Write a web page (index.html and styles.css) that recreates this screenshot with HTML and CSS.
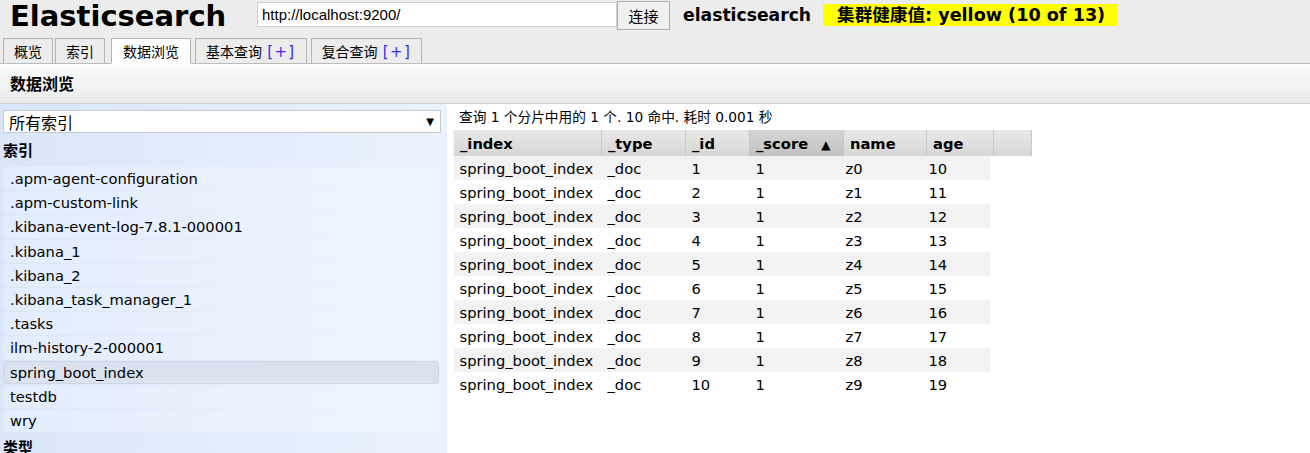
FILE: index.html
```html
<!DOCTYPE html>
<html>
<head>
<meta charset="utf-8">
<link rel="stylesheet" href="styles.css">
</head>
<body>
<div class="header">
  <div class="top">
    <span class="logo">Elasticsearch</span>
    <input class="url" type="text" value="http://localhost:9200/">
    <button class="connect">连接</button>
    <span class="cluster">elasticsearch</span>
    <span class="health">集群健康值: yellow (10 of 13)</span>
  </div>
  <div class="tabs">
    <span class="tab">概览</span>
    <span class="tab">索引</span>
    <span class="tab active">数据浏览</span>
    <span class="tab">基本查询 <b class="plus">[+]</b></span>
    <span class="tab">复合查询 <b class="plus">[+]</b></span>
  </div>
</div>
<div class="section">数据浏览</div>
<div class="main">
  <div class="side">
    <div class="select"><span>所有索引</span><span class="arrow">▼</span></div>
    <div class="group">索引</div>
    <div class="list">
      <div class="item">.apm-agent-configuration</div>
      <div class="item">.apm-custom-link</div>
      <div class="item">.kibana-event-log-7.8.1-000001</div>
      <div class="item">.kibana_1</div>
      <div class="item">.kibana_2</div>
      <div class="item">.kibana_task_manager_1</div>
      <div class="item">.tasks</div>
      <div class="item">ilm-history-2-000001</div>
      <div class="item sel">spring_boot_index</div>
      <div class="item">testdb</div>
      <div class="item">wry</div>
    </div>
    <div class="group last">类型</div>
  </div>
  <div class="content">
    <div class="summary">查询 1 个分片中用的 1 个. 10 命中. 耗时 0.001 秒</div>
    <table class="grid">
      <colgroup>
        <col class="c1"><col class="c2"><col class="c3"><col class="c4"><col class="c5"><col class="c6"><col class="c7">
      </colgroup>
      <thead>
        <tr><th>_index</th><th>_type</th><th>_id</th><th class="sorted">_score <span class="tri">▲</span></th><th>name</th><th>age</th><th></th></tr>
      </thead>
      <tbody>
        <tr class="odd"><td>spring_boot_index</td><td>_doc</td><td>1</td><td>1</td><td>z0</td><td>10</td><td class="blank"></td></tr>
        <tr><td>spring_boot_index</td><td>_doc</td><td>2</td><td>1</td><td>z1</td><td>11</td><td class="blank"></td></tr>
        <tr class="odd"><td>spring_boot_index</td><td>_doc</td><td>3</td><td>1</td><td>z2</td><td>12</td><td class="blank"></td></tr>
        <tr><td>spring_boot_index</td><td>_doc</td><td>4</td><td>1</td><td>z3</td><td>13</td><td class="blank"></td></tr>
        <tr class="odd"><td>spring_boot_index</td><td>_doc</td><td>5</td><td>1</td><td>z4</td><td>14</td><td class="blank"></td></tr>
        <tr><td>spring_boot_index</td><td>_doc</td><td>6</td><td>1</td><td>z5</td><td>15</td><td class="blank"></td></tr>
        <tr class="odd"><td>spring_boot_index</td><td>_doc</td><td>7</td><td>1</td><td>z6</td><td>16</td><td class="blank"></td></tr>
        <tr><td>spring_boot_index</td><td>_doc</td><td>8</td><td>1</td><td>z7</td><td>17</td><td class="blank"></td></tr>
        <tr class="odd"><td>spring_boot_index</td><td>_doc</td><td>9</td><td>1</td><td>z8</td><td>18</td><td class="blank"></td></tr>
        <tr><td>spring_boot_index</td><td>_doc</td><td>10</td><td>1</td><td>z9</td><td>19</td><td class="blank"></td></tr>
      </tbody>
    </table>
  </div>
</div>
</body>
</html>
```

FILE: styles.css
```css
* { box-sizing: border-box; }
html, body { margin: 0; padding: 0; }
body {
  font-family: "DejaVu Sans", Verdana, "Noto Sans CJK SC", sans-serif;
  font-size: 14.7px;
  color: #000;
  background: #fff;
  width: 1310px;
  height: 453px;
  overflow: hidden;
}
.header {
  background: #ececec;
  height: 64px;
  border-bottom: 1px solid #bbbbbb;
  display: flex;
  flex-direction: column;
}
.top {
  display: flex;
  align-items: center;
  height: 36px;
  padding-left: 10px;
}
.logo {
  font-size: 29px;
  font-weight: bold;
  width: 247px;
  line-height: 32px;
  margin-top: -4px;
}
.url {
  width: 360px;
  height: 25px;
  border: 1px solid #cfcfcf;
  background: #fff;
  font-family: "Liberation Sans", Arial, sans-serif;
  font-size: 15px;
  padding: 0 4px;
  margin: 0;
  margin-top: -8px;
}
.connect {
  width: 53px;
  height: 29px;
  margin: 0;
  margin-top: -6px;
  border: 1px solid #adadad;
  background: #f0f0f0;
  font-family: "Noto Sans CJK SC", sans-serif;
  font-size: 15px;
  padding: 0;
}
.cluster {
  font-weight: bold;
  font-size: 17.2px;
  margin-left: 13px;
  margin-top: -6px;
}
.health {
  background: #ffff00;
  font-weight: bold;
  font-size: 17.6px;
  margin-left: 12px;
  margin-top: -6px;
  height: 22px;
  line-height: 22px;
  padding: 0 12px 0 14px;
  font-family: "DejaVu Sans", "Noto Sans CJK SC", sans-serif;
}
.tabs {
  display: flex;
  align-items: flex-end;
  padding-left: 3px;
  margin-top: auto;
  gap: 3px;
}
.tab {
  height: 26px;
  border: 1px solid #b4b4b4;
  padding: 0 10px;
  font-family: "Noto Sans CJK SC", sans-serif;
  font-size: 14px;
  line-height: 25px;
  background: #ececec;
  margin-bottom: -1px;
  border-bottom: 1px solid #bbbbbb;
}
.tab:nth-child(2) { margin-left: -1px; }
.tab.active {
  background: #fff;
  border-bottom-color: #fff;
  padding: 0 11px 0 11px;
  margin-left: 3px;
}
.tab:nth-child(4), .tab:nth-child(5) { margin-left: 1px; }
.plus {
  font-weight: normal;
  color: #3a2ae8;
  font-family: "DejaVu Sans", sans-serif;
  font-size: 15px;
  letter-spacing: 1.4px;
  margin-left: 2px;
}
.section {
  height: 40px;
  background: linear-gradient(#fafbfb, #e8eaec);
  border-bottom: 1px solid #cfd2d5;
  font-family: "Noto Sans CJK SC", sans-serif;
  font-weight: bold;
  font-size: 16px;
  line-height: 38px;
  padding-left: 10px;
}
.main {
  display: flex;
}
.side {
  width: 447px;
  height: 360px;
  background: linear-gradient(to right, #d9e6fb, #eaf2fd);
  padding: 6px 6px 0 3px;
}
.select {
  height: 23px;
  background: #fff;
  border: 1px solid #c6c9cc;
  display: flex;
  justify-content: space-between;
  align-items: center;
  padding: 0 6px 0 5px;
  font-family: "Noto Sans CJK SC", sans-serif;
  font-size: 16px;
}
.select .arrow { font-size: 10px; font-family: "DejaVu Sans", sans-serif; }
.group {
  font-family: "Noto Sans CJK SC", sans-serif;
  font-weight: bold;
  font-size: 15px;
  line-height: 22px;
  height: 34px;
  padding-top: 6px;
}
.group.last { padding-top: 4px; }
.list {
  display: flex;
  flex-direction: column;
  gap: 1px;
  margin-right: 2px;
}
.item {
  height: 23.2px;
  line-height: 22px;
  padding-left: 6px;
  border-radius: 4px;
  background: rgba(255,255,255,0.25);
  border: 1px solid transparent;
}
.item.sel {
  background: #d9e2ee;
  border-color: #ccd6e4;
}
.content {
  flex: 1;
  padding-left: 6px;
}
.summary {
  font-family: "DejaVu Sans", "Noto Sans CJK SC", sans-serif;
  font-size: 13.7px;
  height: 26px;
  line-height: 26px;
  padding-left: 6px;
}
.grid {
  border-collapse: collapse;
  table-layout: fixed;
  width: 578px;
}
.grid th {
  height: 26px;
  text-align: left;
  font-weight: bold;
  padding: 0 6px;
  white-space: nowrap;
  background: linear-gradient(#e8e8e8, #d6d6d6);
  border-left: 1px solid #f4f4f4;
  border-right: 1px solid #c8c8c8;
}
.grid th.sorted { background: linear-gradient(#d4d4d4, #c2c2c2); }
.tri { font-size: 12px; margin-left: 8px; }
.c1 { width: 148px; }
.c2 { width: 84px; }
.c3 { width: 64px; }
.c4 { width: 94px; }
.c5 { width: 83px; }
.c6 { width: 67px; }
.c7 { width: 38px; }
.grid td {
  height: 24px;
  padding: 0 6px;
  white-space: nowrap;
  overflow: visible;
}
.grid td:nth-child(5), .grid td:nth-child(6) { padding-left: 2px; }
.grid tr.odd td { background: #f2f2f2; }
.grid tr.odd td:nth-child(6) { background: linear-gradient(to right, #f2f2f2 63px, #fff 63px); }
.grid tr.odd td.blank { background: #fff; }
```
